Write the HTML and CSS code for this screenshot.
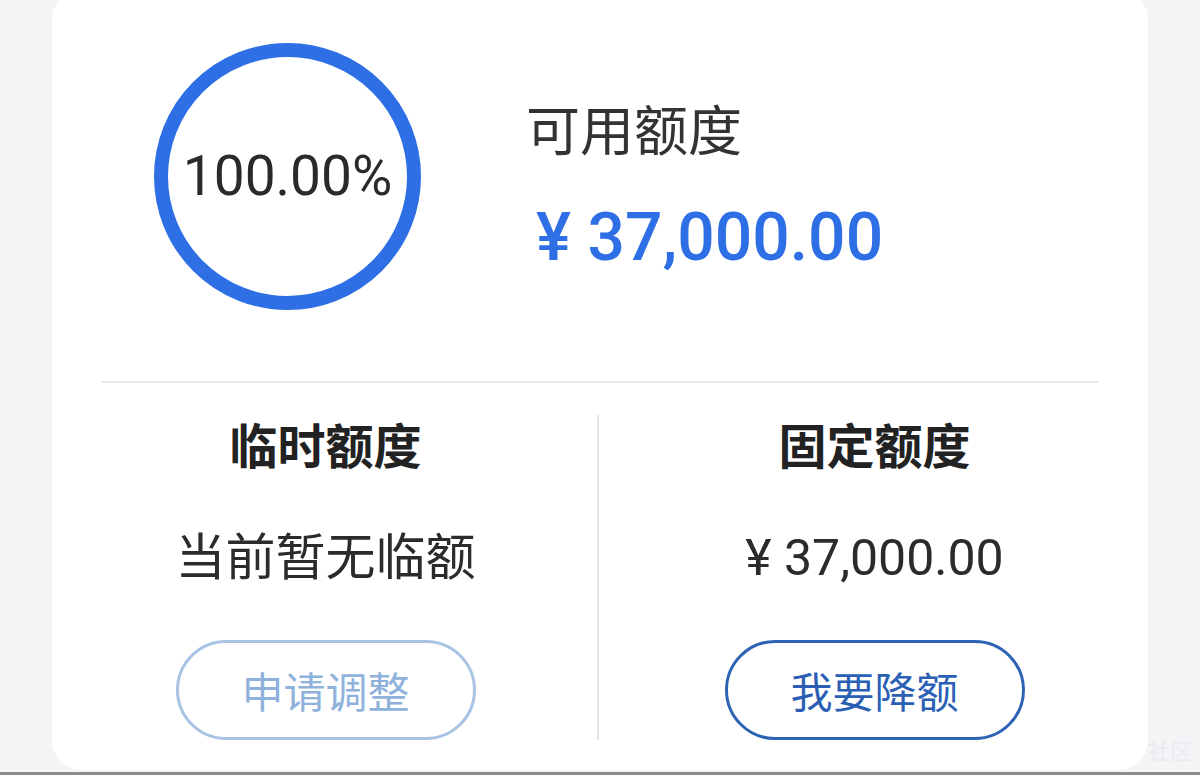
FILE: index.html
```html
<!DOCTYPE html>
<html lang="zh-CN">
<head>
<meta charset="utf-8">
<title>额度</title>
<link rel="stylesheet" href="styles.css">
</head>
<body>
<div class="page">
  <div class="card">
    <div class="summary">
      <div class="ring">
        <svg class="ring-svg" width="267" height="267" viewBox="0 0 267 267">
          <circle cx="133.5" cy="133.5" r="126.5" fill="none" stroke="#2f6fe6" stroke-width="14"/>
        </svg>
        <span class="ring-text">100.00%</span>
      </div>
      <div class="info">
        <div class="info-title">可用额度</div>
        <div class="info-amount">¥ 37,000.00</div>
      </div>
    </div>
    <div class="hr"></div>
    <div class="split">
      <div class="col">
        <div class="col-title">临时额度</div>
        <div class="col-value">当前暂无临额</div>
        <button class="btn btn-disabled">申请调整</button>
      </div>
      <div class="vr"></div>
      <div class="col">
        <div class="col-title">固定额度</div>
        <div class="col-value">¥ 37,000.00</div>
        <button class="btn btn-active">我要降额</button>
      </div>
    </div>
  </div>
  <div class="strip"></div>
  <span class="watermark">社区</span>
</div>
</body>
</html>
```

FILE: styles.css
```css
* { box-sizing: border-box; }
html, body { margin: 0; padding: 0; }
body {
  background: #f3f4f6;
  font-family: Roboto, "Noto Sans CJK SC", sans-serif;
  color: #2b2b2b;
}
.page {
  position: relative;
  height: 775px;
  overflow: hidden;
  display: flex;
  flex-direction: column;
}
.card {
  margin: -10px 52px 0 52px;
  height: 780px;
  flex: none;
  background: #ffffff;
  border-radius: 30px;
}
.summary {
  display: flex;
  align-items: flex-start;
  padding: 53px 0 0 102px;
}
.ring {
  position: relative;
  width: 267px;
  height: 267px;
  flex: none;
  display: flex;
  align-items: center;
  justify-content: center;
}
.ring-svg {
  position: absolute;
  left: 0;
  top: 0;
}
.ring-text {
  position: relative;
  font-size: 55px;
  line-height: 1;
  color: #2a2a2a;
  font-family: Roboto, sans-serif;
}
.info {
  margin: 58px 0 0 107px;
  display: flex;
  flex-direction: column;
}
.info-title {
  font-size: 54px;
  line-height: 64px;
  color: #333333;
  height: 64px;
  margin-left: -2px;
}
.info-amount {
  margin-top: 33px;
  font-size: 66px;
  line-height: 80px;
  font-weight: 500;
  color: #2f6fe6;
  margin-left: 8px;
}
.hr {
  margin: 71px 50px 0 50px;
  height: 2px;
  background: #e8e8ea;
}
.split {
  display: flex;
  padding-top: 32px;
}
.col {
  flex: 1;
  display: flex;
  flex-direction: column;
  align-items: center;
  padding-top: 3px;
}
.vr {
  width: 2px;
  height: 325px;
  background: #e6e6e8;
  flex: none;
  margin-left: -2px;
  margin-right: 2px;
}
.col-title {
  font-size: 48px;
  line-height: 60px;
  font-weight: 700;
  color: #222222;
}
.col-value {
  margin-top: 50px;
  font-size: 50px;
  line-height: 60px;
  color: #2b2b2b;
}
.btn {
  margin-top: 52px;
  width: 300px;
  height: 100px;
  border-radius: 50px;
  background: #ffffff;
  font-family: "Noto Sans CJK SC", sans-serif;
  font-size: 42px;
  line-height: 1;
  padding: 0;
  cursor: pointer;
}
.btn-disabled {
  border: 3px solid #a9c3e4;
  color: #8fb2dc;
}
.btn-active {
  border: 3px solid #2d63b4;
  color: #2b5fb5;
}
.strip {
  margin-top: 2px;
  height: 3px;
  background: #8c8c8e;
  flex: none;
}
.watermark {
  position: absolute;
  left: 1148px;
  top: 733px;
  font-size: 22px;
  color: #e9ebef;
}
```
